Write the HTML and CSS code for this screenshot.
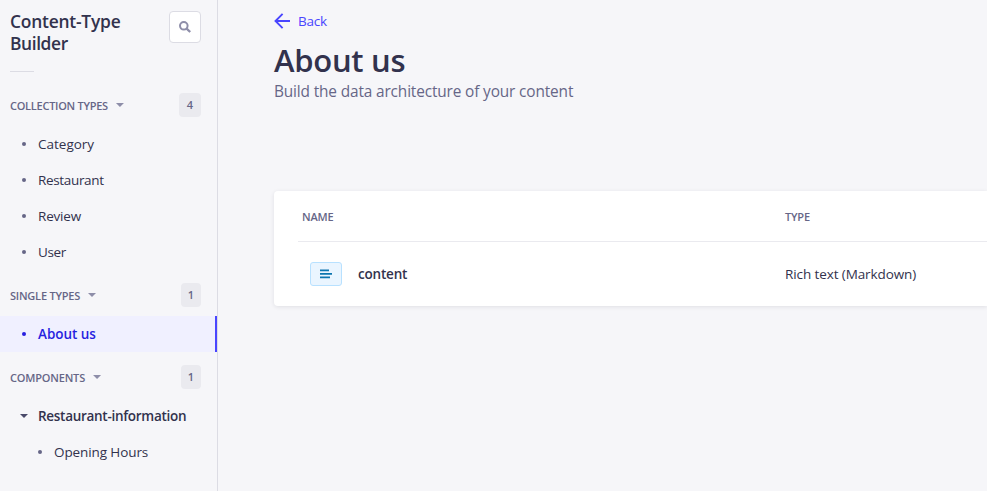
FILE: index.html
```html
<!DOCTYPE html>
<html lang="en">
<head>
<meta charset="utf-8">
<title>Content-Type Builder</title>
<link rel="stylesheet" href="styles.css">
</head>
<body>
<div class="app">
  <nav class="sidebar">
    <div class="sidebar-head">
      <h2 class="sidebar-title"><span class="t-ct">Content-Type</span><br><span class="t-b">Builder</span></h2>
      <button class="search" aria-label="Search"><svg width="12" height="12" viewBox="0 0 12 12" fill="none" stroke="#8e8ea9"><circle cx="4.8" cy="4.8" r="3.8" stroke-width="2"/><path d="M7.6 7.6l3.6 3.4" stroke-width="2.3"/></svg></button>
    </div>
    <div class="divider"></div>

    <section>
      <div class="group"><span class="label l-coll">COLLECTION TYPES</span><i class="caret"></i><span class="badge wide">4</span></div>
      <ul class="list">
        <li class="item"><i class="dot"></i><span class="t-cat">Category</span></li>
        <li class="item"><i class="dot"></i><span class="t-rest">Restaurant</span></li>
        <li class="item"><i class="dot"></i><span class="t-rev">Review</span></li>
        <li class="item"><i class="dot"></i><span class="t-user">User</span></li>
      </ul>
    </section>
    <section>
      <div class="group"><span class="label l-single">SINGLE TYPES</span><i class="caret"></i><span class="badge">1</span></div>
      <ul class="list">
        <li class="item active"><i class="dot"></i><span class="t-about">About us</span></li>
      </ul>
    </section>
    <section>
      <div class="group"><span class="label l-comp">COMPONENTS</span><i class="caret"></i><span class="badge">1</span></div>
      <ul class="list">
        <li class="item parent"><i class="caret dark"></i><span class="t-info">Restaurant-information</span></li>
        <li class="item child"><i class="dot"></i><span class="t-open">Opening Hours</span></li>
      </ul>
    </section>
  </nav>

  <main class="main">
    <a class="back"><svg width="16" height="16" viewBox="0 0 16 16" fill="none" stroke="#4945ff" stroke-width="1.9"><path d="M16 8H1.6M8.6 .9L1.5 8l7.1 7.1"/></svg><span class="t-back">Back</span></a>
    <h1 class="title"><span class="t-title">About us</span></h1>
    <p class="subtitle"><span class="t-sub">Build the data architecture of your content</span></p>
    <div class="card">
      <div class="row head"><span class="name">NAME</span><span>TYPE</span></div>
      <div class="row">
        <span class="name field">
          <span class="type-icon"><svg width="12" height="10" viewBox="0 0 12 10" fill="#0c75af"><path d="M0 .5h9v1.7H0zM0 4h12v1.8H0zM0 7.6h10v1.7H0z"/></svg></span>
          <span class="t-content">content</span>
        </span>
        <span class="t-rich">Rich text (Markdown)</span>
      </div>
    </div>
  </main>
</div>
</body>
</html>
```
FILE: styles.css
```css
* { box-sizing: border-box; }
body {
  margin: 0;
  background: #f6f6f9;
  color: #32324d;
  font: 13.5px/20px "Open Sans", "Noto Sans", sans-serif;
  overflow: hidden;
}
.app { display: flex; height: 491px; }
h1, h2, p, ul { margin: 0; padding: 0; }
span { white-space: nowrap; }

.sidebar { width: 218px; flex: none; padding-top: 11px; border-right: 1px solid #dcdce4; }
.sidebar-head { display: flex; justify-content: space-between; height: 60px; padding: 0 16px 0 10px; }
.sidebar-title { margin-top: -1px; font-size: 17.4px; line-height: 22px; font-weight: 600; }
.search {
  display: flex; align-items: center; justify-content: center;
  width: 32px; height: 32px; padding: 0;
  background: #fff; border: 1px solid #dcdce4; border-radius: 4px;
}
.divider { width: 24px; height: 1px; margin: 0 0 21px 10px; background: #dcdce4; }

.group { display: flex; align-items: center; height: 24px; padding: 0 16px 0 10px; margin-bottom: 9px; }
.label { padding-top: 2px; color: #666687; font-size: 11px; font-weight: 600; }
.caret { width: 8px; height: 4px; margin-left: 8px; background: #8e8ea9; clip-path: polygon(0 0, 100% 0, 50% 100%); }
.badge {
  width: 20px; height: 24px; margin-left: auto;
  background: #eaeaef; border-radius: 4px; color: #666687;
  font-size: 11px; line-height: 24px; font-weight: 600; text-align: center;
}
.badge.wide { width: 22px; }
.list { list-style: none; margin-bottom: 13px; }
.item { display: flex; align-items: center; height: 36px; padding-left: 22px; }
.dot { width: 4px; height: 4px; margin-right: 12px; border-radius: 50%; background: #666687; }
.active { background: #f0f0ff; border-right: 2px solid #4945ff; color: #271fe0; font-weight: 600; }
.active .dot { background: #271fe0; }
.parent { padding-left: 20px; font-weight: 600; }
.caret.dark { margin: 0 10px 0 0; background: #4a4a6a; }
.child { padding-left: 38px; }

.main { flex: 1; min-width: 0; padding: 11px 0 0 56px; }
.back { display: flex; align-items: center; gap: 8px; height: 20px; color: #4945ff; }
.title { margin-top: 9px; font-size: 31px; line-height: 40px; font-weight: 600; }
.subtitle { margin-top: 2px; color: #666687; font-size: 15.4px; line-height: 20px; }
.card {
  height: 115px; margin-top: 89px; padding-left: 24px;
  background: #fff; border-radius: 4px 0 0 4px;
  box-shadow: 0 1px 4px rgba(33, 33, 52, .1);
}
.row { display: flex; align-items: center; height: 64px; }
.head { height: 51px; padding-top: 2px; border-bottom: 1px solid #eaeaef; color: #666687; font-size: 11px; font-weight: 600; }
.name { width: 487px; padding-left: 4px; }
.field { display: flex; align-items: center; gap: 16px; padding-left: 12px; font-weight: 600; }
.type-icon {
  display: flex; align-items: center; justify-content: center;
  width: 32px; height: 24px; background: #eaf5ff; border: 1px solid #b8e1ff; border-radius: 3px;
}

/* Tracking */
.t-ct { letter-spacing: -.22px; }
.t-b { letter-spacing: -.4px; }
.l-coll { letter-spacing: -.26px; }
.l-single { letter-spacing: -.22px; }
.l-comp { letter-spacing: -.18px; }
.head { letter-spacing: -.2px; }
.t-rest { letter-spacing: -.34px; }
.t-rev { letter-spacing: -.2px; }
.t-user { letter-spacing: -.4px; }
.t-about { letter-spacing: -.05px; }
.t-info { letter-spacing: -.29px; }
.t-open { letter-spacing: -.1px; }
.t-back { letter-spacing: -.25px; }
.t-title { letter-spacing: -.27px; }
.t-sub { letter-spacing: -.14px; }
.t-content { letter-spacing: -.2px; }
.t-rich { letter-spacing: -.1px; }
```
